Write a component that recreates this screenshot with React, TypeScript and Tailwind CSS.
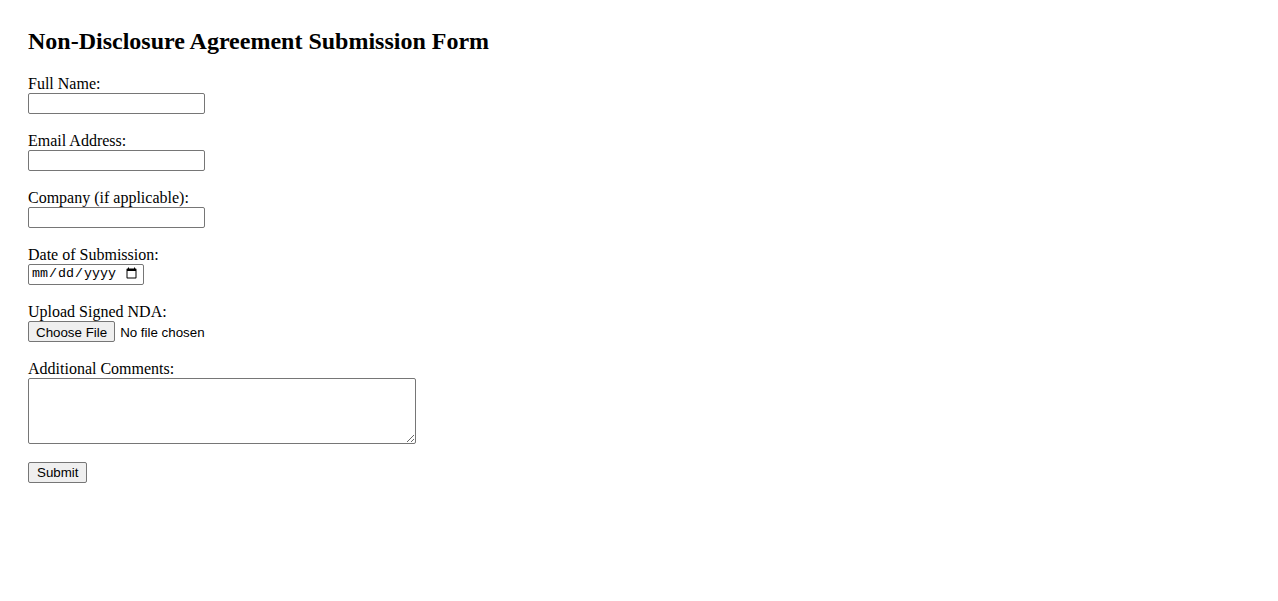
const fieldClass =
  "block w-[177px] h-[21px] px-[2px] py-[1px] bg-white border border-[#767676] rounded-[2px] text-[13.33px] font-['Liberation_Sans',Arial,sans-serif] outline-none";

const Field = ({ label, children }: { label: string; children: React.ReactNode }) => (
  <div className="flex flex-col items-start mb-[18px]">
    <label className="block leading-[18px] h-[18px]">{label}</label>
    {children}
  </div>
);

export default function App() {
  return (
    <div className="min-h-screen bg-white text-black font-['Liberation_Serif','Times_New_Roman',serif] text-[16px]">
      <div className="pt-[28px] pl-[28px]">
        <h2 className="text-[24px] font-bold leading-[27.6px] mb-[19px]">
          Non-Disclosure Agreement Submission Form
        </h2>
        <form className="flex flex-col items-start" onSubmit={(e) => e.preventDefault()}>
          <Field label="Full Name:">
            <input type="text" className={fieldClass} />
          </Field>
          <Field label="Email Address:">
            <input type="email" className={fieldClass} />
          </Field>
          <Field label="Company (if applicable):">
            <input type="text" className={fieldClass} />
          </Field>
          <Field label="Date of Submission:">
            <input
              type="date"
              className="block w-[116px] h-[21px] pl-[2px] pr-[3px] bg-white border border-[#767676] rounded-[2px] text-[13.33px] font-['Liberation_Mono',monospace] outline-none"
            />
          </Field>
          <Field label="Upload Signed NDA:">
            <input
              type="file"
              className="block h-[21px] text-[13.33px] leading-[21px] font-['Liberation_Sans',Arial,sans-serif] file:h-[21px] file:mr-[5px] file:px-[7px] file:bg-[#efefef] file:border file:border-[#767676] file:rounded-[2px] file:text-black"
            />
          </Field>
          <Field label="Additional Comments:">
            <textarea className="block w-[388px] h-[66px] p-[2px] bg-white border border-[#767676] rounded-[2px] text-[13.33px] font-['Liberation_Mono',monospace] outline-none" />
          </Field>
          <button
            type="submit"
            className="h-[21px] px-[8px] bg-[#efefef] border border-[#767676] rounded-[2px] text-[13.33px] leading-[19px] font-['Liberation_Sans',Arial,sans-serif]"
          >
            Submit
          </button>
        </form>
      </div>
    </div>
  );
}
